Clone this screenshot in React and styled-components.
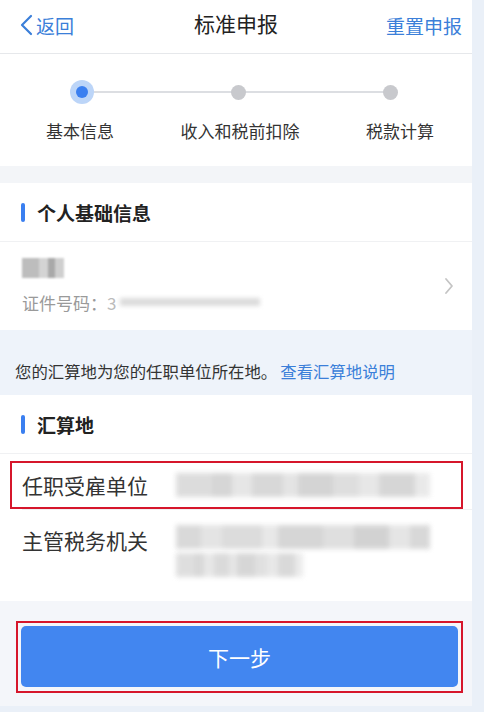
import React from 'react';
import styled, { createGlobalStyle } from 'styled-components';

const GlobalStyle = createGlobalStyle`
    html, body {
        margin: 0;
        padding: 0;
        background-color: #eaf0f8;
    }
    body {
        font-family: "Noto Sans CJK SC", "Noto Sans", sans-serif;
        color: #333;
    }
`;

const Page = styled.div`
    width: 472px;
    height: 706px;
    background-color: #f4f6fa;
    display: flex;
    flex-direction: column;
    overflow: hidden;
`;

const Header = styled.div`
    height: 53px;
    background: #fff;
    border-bottom: 1px solid #e6e8eb;
    display: flex;
    align-items: center;
    justify-content: space-between;
    padding: 0 10px 0 19px;
    position: relative;
`;

const HeaderLink = styled.div`
    display: flex;
    align-items: center;
    gap: 3px;
    color: #3b7fd9;
    font-size: 19px;
    margin-top: -3px;
`;

const Title = styled.div`
    position: absolute;
    left: 0;
    right: 0;
    top: 8px;
    text-align: center;
    font-size: 21px;
    color: #222;
    pointer-events: none;
`;

const Steps = styled.div`
    background: #fff;
    height: 112px;
    display: flex;
    flex-direction: column;
    padding-top: 26px;
    box-sizing: border-box;
`;

const Track = styled.div`
    position: relative;
    height: 24px;
    margin: 0 74px 0 70px;
    display: flex;
    align-items: center;
    justify-content: space-between;

    &::before {
        content: '';
        position: absolute;
        left: 12px;
        right: 8px;
        top: 11px;
        height: 2px;
        background: #dcdee2;
    }
`;

const Dot = styled.span`
    position: relative;
    width: ${p => (p.$active ? '12px' : '15px')};
    height: ${p => (p.$active ? '12px' : '15px')};
    border-radius: 50%;
    background: ${p => (p.$active ? '#3a7ff0' : '#c8c9cd')};
    box-shadow: ${p => (p.$active ? '0 0 0 6px #bcd5f8' : 'none')};
    margin: ${p => (p.$active ? '0 6px' : '0')};
`;

const StepLabels = styled.div`
    display: flex;
    justify-content: space-between;
    padding: 0 38px 0 46px;
    margin-top: 14px;
    font-size: 17px;
    color: #333;
`;

const Gap = styled.div`
    height: 17px;
    background: #f3f5f8;
`;

const Card = styled.div`
    background: #fff;
`;

const SectionHead = styled.div`
    height: 59px;
    display: flex;
    align-items: center;
    gap: 12px;
    padding-left: 21px;
    font-size: 19px;
    font-weight: 700;
    color: #222;
    border-bottom: 1px solid #f0f1f3;
    box-sizing: border-box;

    &::before {
        content: '';
        width: 4px;
        height: 19px;
        border-radius: 2px;
        background: #3a7ff0;
    }
`;

const PersonRow = styled.div`
    height: 88px;
    display: flex;
    align-items: center;
    justify-content: space-between;
    padding: 0 18px 0 22px;
`;

const PersonInfo = styled.div`
    display: flex;
    flex-direction: column;
    gap: 12px;
`;

const Blur = styled.div`
    width: ${p => p.$w}px;
    height: ${p => p.$h}px;
    background: ${p => p.$bg};
    filter: blur(${p => p.$blur || 1.5}px);
    opacity: ${p => p.$op || 1};
`;

const IdLine = styled.div`
    display: flex;
    align-items: center;
    font-size: 17px;
    color: #9a9a9a;
`;

const IdStart = styled.span`
    color: #bbb;
    margin-right: 4px;
`;

const Notice = styled.div`
    height: 65px;
    background: #eef3fa;
    display: flex;
    align-items: center;
    padding: 17px 15px 0;
    box-sizing: border-box;
    font-size: 16.4px;
    color: #333;
`;

const NoticeLink = styled.span`
    color: #3b7fd9;
    margin-left: 3px;
`;

const Row = styled.div`
    display: flex;
    align-items: ${p => (p.$top ? 'flex-start' : 'center')};
    gap: 28px;
    margin: ${p => (p.$highlight ? '7px 9px 0 10px' : '0 0 0 22px')};
    padding: ${p => (p.$highlight ? '0 0 0 10px' : '15px 0 24px 0')};
    height: ${p => (p.$highlight ? '44px' : 'auto')};
    border: ${p => (p.$highlight ? '2px solid #d6162b' : 'none')};
    border-top: ${p => (p.$divider ? '1px solid #f0f1f3' : '')};
    font-size: 21px;
    color: #333;
`;

const RowLabel = styled.div`
    flex: none;
    line-height: 30px;
`;

const RowValue = styled.div`
    display: flex;
    flex-direction: column;
    gap: 4px;
`;

const Footer = styled.div`
    flex: 1;
    background: #f4f6fa;
    padding: 20px 9px 0 16px;
`;

const ButtonFrame = styled.div`
    border: 2px solid #d6162b;
    padding: 3px 3px 4px 3px;
`;

const NextButton = styled.button`
    width: 100%;
    height: 61px;
    border: none;
    border-radius: 5px;
    background: #4286f0;
    color: #fff;
    font-family: inherit;
    font-size: 21px;
    display: block;
`;

const mosaicA = 'linear-gradient(90deg, #d7d7d7 0 14%, #cfcfcf 14% 22%, #e2e2e2 22% 30%, #d2d2d2 30% 42%, #e0e0e0 42% 48%, #cdcdcd 48% 62%, #d9d9d9 62% 72%, #e3e3e3 72% 80%, #d0d0d0 80% 94%, #e6e6e6 94%)';
const mosaicB = 'linear-gradient(90deg, #d3d3d3 0 10%, #e0e0e0 10% 18%, #d6d6d6 18% 34%, #e4e4e4 34% 40%, #cfcfcf 40% 58%, #dadada 58% 70%, #cbcbcb 70% 84%, #e1e1e1 84% 92%, #d2d2d2 92%)';

function BackArrow() {
    return (
        <svg width="14" height="22" viewBox="0 0 14 22" fill="none">
            <path d="M12 2 L3 11 L12 20" stroke="#3b7fd9" strokeWidth="2.2" strokeLinecap="round" strokeLinejoin="round" />
        </svg>
    );
}

function RightArrow() {
    return (
        <svg width="10" height="18" viewBox="0 0 10 18" fill="none">
            <path d="M2 2 L8 9 L2 16" stroke="#c4c4c4" strokeWidth="1.8" strokeLinecap="round" strokeLinejoin="round" />
        </svg>
    );
}

function App() {
    return (
        <>
            <GlobalStyle />
            <Page>
                <Header>
                    <HeaderLink>
                        <BackArrow />
                        返回
                    </HeaderLink>
                    <Title>标准申报</Title>
                    <HeaderLink>重置申报</HeaderLink>
                </Header>

                <Steps>
                    <Track>
                        <Dot $active />
                        <Dot />
                        <Dot />
                    </Track>
                    <StepLabels>
                        <span>基本信息</span>
                        <span>收入和税前扣除</span>
                        <span>税款计算</span>
                    </StepLabels>
                </Steps>

                <Gap />

                <Card>
                    <SectionHead>个人基础信息</SectionHead>
                    <PersonRow>
                        <PersonInfo>
                            <Blur $w={42} $h={20} $bg="linear-gradient(90deg, #bdbdbd 0 40%, #d4d4d4 40% 62%, #a9a9a9 62% 78%, #cfcfcf 78%)" $blur={1.2} />
                            <IdLine>
                                证件号码：
                                <IdStart>3</IdStart>
                                <Blur $w={140} $h={8} $bg="#dcdcdc" $blur={2} />
                            </IdLine>
                        </PersonInfo>
                        <RightArrow />
                    </PersonRow>
                </Card>

                <Notice>
                    您的汇算地为您的任职单位所在地。
                    <NoticeLink>查看汇算地说明</NoticeLink>
                </Notice>

                <Card>
                    <SectionHead>汇算地</SectionHead>
                    <Row $highlight>
                        <RowLabel>任职受雇单位</RowLabel>
                        <RowValue>
                            <Blur $w={254} $h={24} $bg={mosaicA} $blur={2.5} $op={0.85} />
                        </RowValue>
                    </Row>
                    <Row $top $divider>
                        <RowLabel>主管税务机关</RowLabel>
                        <RowValue>
                            <Blur $w={254} $h={24} $bg={mosaicB} $blur={2.5} $op={0.85} />
                            <Blur $w={127} $h={24} $bg={mosaicA} $blur={2.5} $op={0.8} />
                        </RowValue>
                    </Row>
                </Card>

                <Footer>
                    <ButtonFrame>
                        <NextButton>下一步</NextButton>
                    </ButtonFrame>
                </Footer>
            </Page>
        </>
    );
}

export default App;
